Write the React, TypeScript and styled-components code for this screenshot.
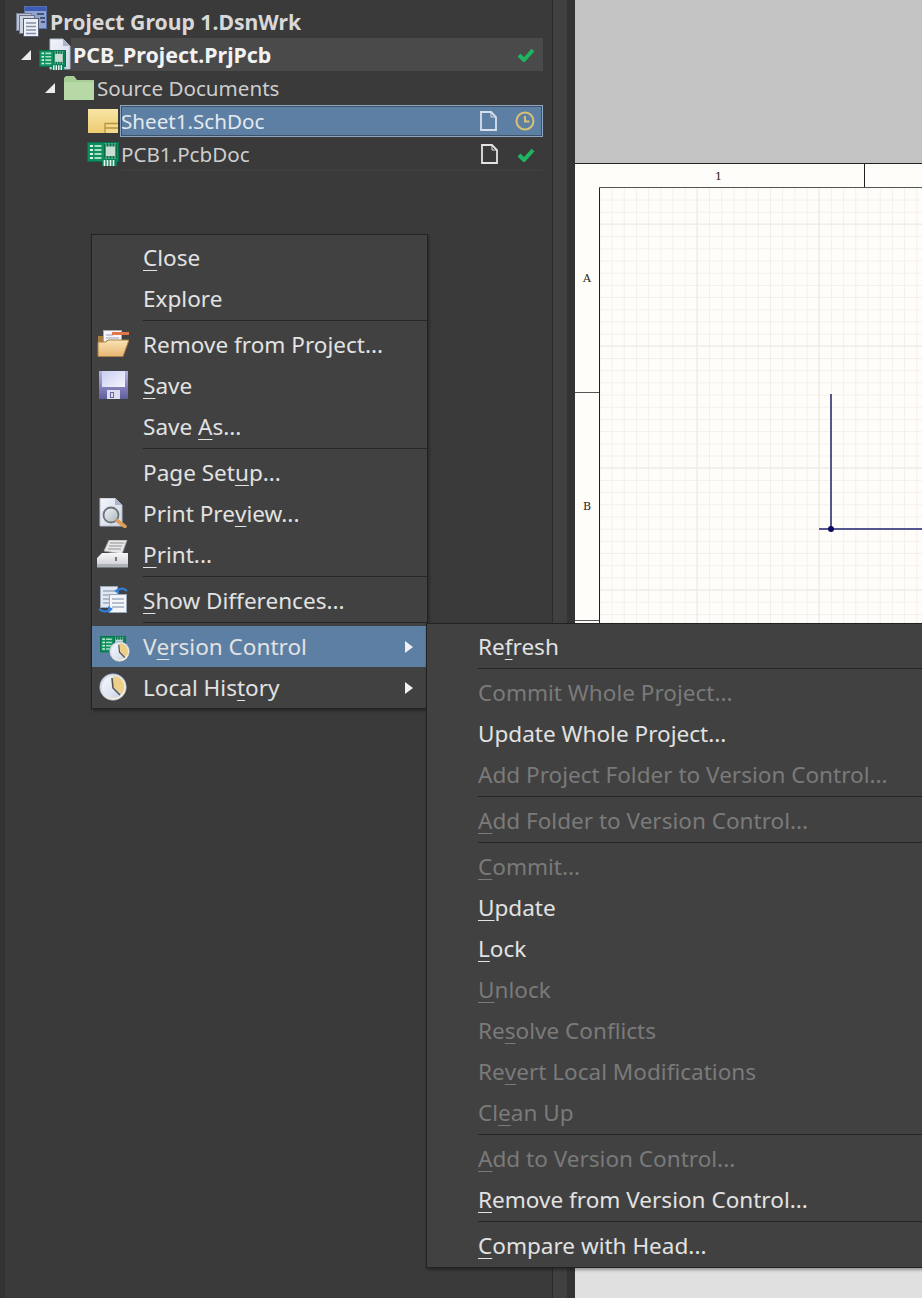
import { Fragment } from "react";
import styled, { createGlobalStyle } from "styled-components";

const GlobalStyle = createGlobalStyle`
  html, body {
    margin: 0;
    padding: 0;
    background: #3a3a3a;
  }
  #root {
    width: 922px;
    height: 1298px;
    overflow: hidden;
  }
`;

const FONT = `"Noto Sans", "Open Sans", sans-serif`;

// "&" marks the underlined mnemonic letter, the way the app's menu strings do
function Label({ text }: { text: string }) {
  const at = text.indexOf("&");
  if (at < 0) return <>{text}</>;
  return (
    <>
      {text.slice(0, at)}
      <Mnemonic>{text[at + 1]}</Mnemonic>
      {text.slice(at + 2)}
    </>
  );
}

/* ---------- icons ---------- */

// shared gradients, referenced by id from the icons below
function IconDefs() {
  return (
    <svg width="0" height="0" style={{ position: "absolute" }}>
      <defs>
        <linearGradient id="clockFace" x1="0" y1="0" x2="1" y2="1">
          <stop offset="0" stopColor="#f6f8fc" />
          <stop offset="0.55" stopColor="#dfe6f3" />
          <stop offset="1" stopColor="#c3cde2" />
        </linearGradient>
        <linearGradient id="clockRim" x1="0" y1="0" x2="1" y2="1">
          <stop offset="0" stopColor="#cfd8ea" />
          <stop offset="1" stopColor="#fff3d2" />
        </linearGradient>
        <linearGradient id="floppy" x1="0" y1="0" x2="0" y2="1">
          <stop offset="0" stopColor="#b3b2de" />
          <stop offset="1" stopColor="#5f5e9e" />
        </linearGradient>
        <linearGradient id="floppyLabel" x1="0" y1="0" x2="1" y2="1">
          <stop offset="0" stopColor="#c9cdf0" />
          <stop offset="1" stopColor="#f5f6fd" />
        </linearGradient>
        <linearGradient id="folderFront" x1="0" y1="0" x2="0" y2="1">
          <stop offset="0" stopColor="#f9e4b4" />
          <stop offset="1" stopColor="#e7b672" />
        </linearGradient>
        <linearGradient id="sheet" x1="0" y1="0" x2="0" y2="1">
          <stop offset="0" stopColor="#f8e5a6" />
          <stop offset="1" stopColor="#eecb70" />
        </linearGradient>
        <linearGradient id="printer" x1="0" y1="0" x2="0" y2="1">
          <stop offset="0" stopColor="#f7f7f8" />
          <stop offset="1" stopColor="#c9ccd2" />
        </linearGradient>
        <linearGradient id="page" x1="0" y1="0" x2="1" y2="1">
          <stop offset="0" stopColor="#f3f6fb" />
          <stop offset="1" stopColor="#cdd6e6" />
        </linearGradient>
        <linearGradient id="lens" x1="0" y1="0" x2="1" y2="1">
          <stop offset="0" stopColor="#f2f5f7" />
          <stop offset="1" stopColor="#a9b6bd" />
        </linearGradient>
      </defs>
    </svg>
  );
}

function WorkspaceIcon() {
  return (
    <svg width="32" height="32" viewBox="0 0 32 32">
      <rect x="9.500" y="0.500" width="22" height="22" fill="#8fa3cf" stroke="#5a6fa8" />
      <rect x="10" y="1" width="21" height="4" fill="#3d5cb8" />
      <rect x="1.500" y="7.500" width="15" height="17" fill="#b9c0cf" stroke="#77809a" />
      <rect x="4.500" y="9.500" width="15" height="18" fill="#cdd3e0" stroke="#6c748c" />
      <rect x="8.500" y="12.500" width="15" height="18" fill="#eef1f7" stroke="#565e76" />
      <path d="M11 17h10M11 20.500h10M11 24h10M11 27.500h10" stroke="#8590a8" strokeWidth="1.300" />
      <path d="M22 8h7M25 12h5M26 16h4" stroke="#2f3a58" strokeWidth="1.500" />
    </svg>
  );
}

function PcbChip({ size = 32 }: { size?: number }) {
  return (
    <svg width={size} height={size * 0.75} viewBox="0 0 32 24">
      <rect x="0" y="0" width="32" height="20" fill="#0e8f60" />
      <rect x="0.500" y="0.500" width="31" height="19" fill="none" stroke="#0a6f4b" />
      <rect x="3" y="3" width="3" height="2" fill="#d9f3e2" />
      <rect x="3" y="7" width="3" height="2" fill="#d9f3e2" />
      <rect x="3" y="11" width="3" height="2" fill="#d9f3e2" />
      <rect x="3" y="15" width="3" height="2" fill="#d9f3e2" />
      <path d="M7.500 4h7M7.500 8h7M7.500 12h7M7.500 16h7" stroke="#a8e0bf" strokeWidth="1.800" />
      <rect x="17" y="2" width="13" height="14" fill="#0b6b49" />
      <path d="M19 1v16M22 1v16M25 1v16M28 1v16" stroke="#7cc9a2" strokeWidth="1" />
      <rect x="19" y="4.500" width="9" height="9.500" fill="#c8ddd3" />
      <rect x="15" y="17" width="15" height="7" fill="#0c7d55" />
      <path d="M17.500 18v6M20.500 18v6M23.500 18v6M26.500 18v6" stroke="#eef8f1" strokeWidth="1.700" />
    </svg>
  );
}

function ProjectIcon() {
  return (
    <IconStack>
      <svg width="34" height="33" viewBox="0 0 34 33">
        <path d="M12 1h13l7 7v23H12z" fill="url(#page)" stroke="#b8bfd0" />
        <path d="M25 1v7h7z" fill="#aab3c8" />
      </svg>
      <ChipOverlay>
        <PcbChip size={27} />
      </ChipOverlay>
    </IconStack>
  );
}

function FolderIcon() {
  return (
    <svg width="30" height="26" viewBox="0 0 30 26">
      <path d="M0 25V3l2-2h8l3 4h17v20z" fill="#a7cf95" />
      <rect x="0" y="7" width="30" height="18" fill="#b6d9a5" />
    </svg>
  );
}

function SheetIcon() {
  return (
    <svg width="30" height="24" viewBox="0 0 30 24">
      <rect x="0" y="0" width="30" height="24" fill="url(#sheet)" />
      <rect x="17" y="14" width="13" height="10" fill="#f3d98d" />
      <path d="M17 24v-9.500h13M17 19h13" fill="none" stroke="#b8923f" strokeWidth="1.300" />
    </svg>
  );
}

function DocIcon({ color }: { color: string }) {
  return (
    <svg width="17" height="20" viewBox="0 0 17 20" fill="none" stroke={color} strokeWidth="1.800">
      <path d="M1 1h10l5 5v13H1z" />
      <path d="M11 1v5h5" strokeWidth="1" />
    </svg>
  );
}

function CheckIcon() {
  return (
    <svg width="18" height="15" viewBox="0 0 18 15">
      <path d="M2 8l5 5L16 3" fill="none" stroke="#1fb45f" strokeWidth="4" />
    </svg>
  );
}

function PendingIcon() {
  return (
    <svg width="20" height="20" viewBox="0 0 20 20" fill="none" stroke="#d9c272" strokeWidth="2">
      <circle cx="10" cy="10" r="8.500" />
      <path d="M10 5v5.500h4.500" />
    </svg>
  );
}

function OpenFolderIcon() {
  return (
    <svg width="32" height="27" viewBox="0 0 32 27">
      <path d="M1 6h5l1-2v8H1z" fill="#a97c43" />
      <rect x="6.500" y="0.500" width="18" height="17" fill="#f5f6f8" stroke="#a9a9a9" />
      <path d="M9 5h7M9 8h13M9 11h13M9 14h13" stroke="#94a0b5" />
      <rect x="15" y="2" width="17" height="3" fill="#e0764a" />
      <path d="M1 26.500V12h8l2-2h21l-6 16.500z" fill="url(#folderFront)" stroke="#a77f45" />
    </svg>
  );
}

function FloppyIcon() {
  return (
    <svg width="29" height="28" viewBox="0 0 29 28">
      <rect x="0" y="0" width="29" height="28" fill="url(#floppy)" />
      <rect x="3" y="0" width="23" height="16" fill="url(#floppyLabel)" />
      <rect x="8" y="19" width="13" height="9" fill="#dcddee" />
      <rect x="11" y="21" width="4" height="6" fill="#68689c" />
      <rect x="12" y="22" width="2" height="4" fill="#dcddee" />
    </svg>
  );
}

function PreviewIcon() {
  return (
    <svg width="28" height="30" viewBox="0 0 28 30">
      <path d="M1 0h15l7 7v21H1z" fill="url(#page)" stroke="#b5bccd" />
      <path d="M16 0v7h7z" fill="#aab4ca" />
      <circle cx="12" cy="17" r="7.500" fill="url(#lens)" stroke="#6b7378" strokeWidth="1.800" />
      <path d="M18 22.500l8 6" stroke="#dd9d55" strokeWidth="3.500" strokeLinecap="round" />
    </svg>
  );
}

function PrinterIcon() {
  return (
    <svg width="32" height="28" viewBox="0 0 32 28">
      <path d="M7 11l5-11h18l-5 14z" fill="#e8e8ea" stroke="#a5a5a8" />
      <path d="M13 3h14M12 6h13M11 9h13" stroke="#8f8f92" />
      <path d="M5 13h26v14H0V18z" fill="url(#printer)" />
      <rect x="0" y="24" width="31" height="3.500" fill="#aeb3ba" />
      <rect x="18" y="17" width="2" height="4" fill="#777" />
    </svg>
  );
}

function DiffIcon() {
  return (
    <svg width="30" height="30" viewBox="0 0 30 30">
      <rect x="2.500" y="1.500" width="17" height="21" fill="#e2e8f2" stroke="#9aa7b9" />
      <path d="M5 6h12M5 10h12M5 14h12M5 18h7" stroke="#7a8aa0" />
      <rect x="11.500" y="9.500" width="17" height="18" fill="#f3f5f9" stroke="#9aa7b9" />
      <path d="M14 14h12M14 18h12M14 22h12" stroke="#7a8aa0" />
      <path d="M29 6c-3-3-7-3-11 0" fill="none" stroke="#2f7fd8" strokeWidth="2" />
      <path d="M16 6l5-3v6z" fill="#2f7fd8" />
      <path d="M1 24c3 3 7 3 11 1" fill="none" stroke="#2f7fd8" strokeWidth="2" />
      <path d="M15 24l-5-3v7z" fill="#2f7fd8" />
    </svg>
  );
}

function ClockFace({ size }: { size: number }) {
  return (
    <svg width={size} height={size} viewBox="0 0 28 28">
      <circle cx="14" cy="14" r="13.500" fill="url(#clockRim)" stroke="#3b5d9c" strokeWidth="0.400" />
      <circle cx="14" cy="14" r="11" fill="url(#clockFace)" />
      <path d="M14 14l8.500 7A11 11 0 0 0 14 3z" fill="#ecd08a" />
      <path d="M13 5l1 10 7 7" fill="none" stroke="#55524f" strokeWidth="1.600" />
    </svg>
  );
}

function VersionIcon() {
  return (
    <IconStack>
      <PcbChip size={26} />
      <ClockOverlay>
        <ClockFace size={21} />
      </ClockOverlay>
    </IconStack>
  );
}

/* ---------- data ---------- */

type Entry = { label?: string; icon?: React.ReactNode; disabled?: boolean; active?: boolean; arrow?: boolean };
const SEP: Entry = {};

const contextMenu: Entry[] = [
  { label: "&Close" },
  { label: "Explore" },
  SEP,
  { label: "Remove from Project...", icon: <OpenFolderIcon /> },
  { label: "&Save", icon: <FloppyIcon /> },
  { label: "Save &As..." },
  SEP,
  { label: "Page Set&up..." },
  { label: "Print Pre&view...", icon: <PreviewIcon /> },
  { label: "&Print...", icon: <PrinterIcon /> },
  SEP,
  { label: "&Show Differences...", icon: <DiffIcon /> },
  SEP,
  { label: "V&ersion Control", icon: <VersionIcon />, active: true, arrow: true },
  { label: "Local His&tory", icon: <ClockFace size={28} />, arrow: true },
];

const versionMenu: Entry[] = [
  { label: "Re&fresh" },
  SEP,
  { label: "Commit Whole Project...", disabled: true },
  { label: "Update Whole Project..." },
  { label: "Add Project Folder to Version Control...", disabled: true },
  SEP,
  { label: "&Add Folder to Version Control...", disabled: true },
  SEP,
  { label: "&Commit...", disabled: true },
  { label: "&Update" },
  { label: "&Lock" },
  { label: "&Unlock", disabled: true },
  { label: "Re&solve Conflicts", disabled: true },
  { label: "Re&vert Local Modifications", disabled: true },
  { label: "Cl&ean Up", disabled: true },
  SEP,
  { label: "&Add to Version Control...", disabled: true },
  { label: "&Remove from Version Control..." },
  SEP,
  { label: "&Compare with Head..." },
];

function MenuList({ items }: { items: Entry[] }) {
  return (
    <>
      {items.map((item, i) =>
        item.label ? (
          <MenuRow key={i} $active={item.active} $disabled={item.disabled}>
            <MenuIcon>{item.icon}</MenuIcon>
            <Label text={item.label} />
            {item.arrow && <Arrow />}
          </MenuRow>
        ) : (
          <Fragment key={i}>
            <MenuSep />
          </Fragment>
        )
      )}
    </>
  );
}

export default function App() {
  return (
    <Page>
      <GlobalStyle />
      <IconDefs />
      <TreePanel>
        <Tree>
          <TreeRow $indent={15}>
            <WorkspaceIcon />
            <GroupName>Project Group 1.DsnWrk</GroupName>
          </TreeRow>
          <TreeRow $indent={21} $height={33}>
            <Twist $gap={7} />
            <ProjectIcon />
            <ProjectName>
              PCB_Project.PrjPcb
              <StatusCell $first>
                <CheckIcon />
              </StatusCell>
            </ProjectName>
          </TreeRow>
          <TreeRow $indent={45} $height={34}>
            <Twist $gap={9} />
            <FolderIcon />
            <PlainName $gap={3}>Source Documents</PlainName>
          </TreeRow>
          <TreeRow $indent={88} $height={32}>
            <SheetIcon />
            <SelectedName>
              Sheet1.SchDoc
              <DocCell>
                <DocIcon color="#d7e1ee" />
              </DocCell>
              <StatusCell>
                <PendingIcon />
              </StatusCell>
            </SelectedName>
          </TreeRow>
          <TreeRow $indent={87} $height={34}>
            <PcbChip />
            <PlainName $gap={2} $ruled>
              PCB1.PcbDoc
              <DocCell>
                <DocIcon color="#e4e4e4" />
              </DocCell>
              <StatusCell>
                <CheckIcon />
              </StatusCell>
            </PlainName>
          </TreeRow>
        </Tree>
      </TreePanel>
      <Gutter />
      <Canvas>
        <CanvasTop />
        <Sheet>
          <LeftRail>
            <RailCell $h={229}>A</RailCell>
            <RailCell $h={228}>B</RailCell>
            <RailCell $h={228} />
          </LeftRail>
          <TopRail>
            <ColumnCell $w={266}>1</ColumnCell>
            <ColumnCell />
          </TopRail>
          <GridArea>
            <Wires width="323" height="1079" viewBox="0 0 323 1079">
              <path d="M232 207V342M220 342H323" fill="none" stroke="#55558f" strokeWidth="2" />
              <circle cx="232" cy="342" r="3" fill="#0a0a5e" />
            </Wires>
          </GridArea>
        </Sheet>
      </Canvas>
      <ContextMenu>
        <MenuList items={contextMenu} />
      </ContextMenu>
      <SubMenu>
        <MenuList items={versionMenu} />
      </SubMenu>
    </Page>
  );
}

/* ---------- layout ---------- */

const Page = styled.div`
  position: relative;
  display: flex;
  width: 922px;
  height: 1298px;
  overflow: hidden;
  font-family: ${FONT};
  color: #dedede;
`;

const TreePanel = styled.aside`
  width: 553px;
  flex: none;
  box-sizing: border-box;
  background: #3a3a3a;
  border-left: 5px solid #333333;
  border-right: 1px solid #2b2b2b;
`;

const Tree = styled.div`
  display: flex;
  flex-direction: column;
  padding-top: 5px;
  margin-left: -5px;
  width: 543px;
`;

const TreeRow = styled.div<{ $indent: number; $height?: number }>`
  display: flex;
  align-items: center;
  height: ${(p) => p.$height ?? 33}px;
  padding-left: ${(p) => p.$indent}px;
  box-sizing: border-box;
`;

const Twist = styled.span<{ $gap: number }>`
  width: 0;
  height: 0;
  margin-right: ${(p) => p.$gap}px;
  border-style: solid;
  border-width: 0 0 10px 10px;
  border-color: transparent transparent #ececec transparent;
`;

const IconStack = styled.span`
  position: relative;
  display: inline-flex;
`;

const ChipOverlay = styled.span`
  position: absolute;
  left: 1px;
  bottom: 1px;
  display: flex;
`;

const ClockOverlay = styled.span`
  position: absolute;
  right: -4px;
  bottom: -7px;
  display: flex;
`;

const GroupName = styled.span`
  font-size: 21.200px;
  font-weight: 700;
  color: #d8d8d8;
  margin-left: 3px;
`;

const ProjectName = styled.span`
  flex: 1;
  display: flex;
  align-items: center;
  align-self: stretch;
  font-size: 21.400px;
  font-weight: 700;
  color: #f2f2f2;
  background: #4a4a4a;
  margin-left: -1px;
  padding-left: 2px;
`;

const PlainName = styled.span<{ $gap: number; $ruled?: boolean }>`
  flex: 1;
  display: flex;
  align-items: center;
  align-self: stretch;
  font-size: 20.600px;
  margin-left: ${(p) => p.$gap}px;
  color: #cdcdcd;
  box-shadow: ${(p) => (p.$ruled ? "inset 0 -1px 0 #414141" : "none")};
`;

const SelectedName = styled.span`
  flex: 1;
  display: flex;
  align-items: center;
  align-self: stretch;
  font-size: 20.600px;
  color: #e4e9ef;
  margin-left: 2px;
  background: #5d7fa3;
  border: 1px solid #8ea6bf;
  box-shadow: inset 0 0 0 1px #3e526b;
  box-sizing: border-box;
`;

const DocCell = styled.span`
  display: flex;
  margin-left: auto;
  margin-right: 18px;
`;

const StatusCell = styled.span<{ $first?: boolean }>`
  display: flex;
  justify-content: center;
  width: 20px;
  margin-right: 7px;
  margin-left: ${(p) => (p.$first ? "auto" : "0")};
`;

const Gutter = styled.div`
  width: 22px;
  flex: none;
  background: linear-gradient(to right, #404040 0 14px, #333333 14px);
`;

const Canvas = styled.main`
  flex: 1;
  display: flex;
  flex-direction: column;
  background: #e0e0e0;
`;

const CanvasTop = styled.div`
  height: 163px;
  flex: none;
  background: #c3c3c3;
`;

const Sheet = styled.section`
  display: grid;
  grid-template-columns: 24px 1fr;
  grid-template-rows: 25px 1fr;
  height: 1104px;
  flex: none;
  background: #fffdf9;
  font-family: "DejaVu Serif", "Liberation Serif", serif;
  font-size: 11px;
  color: #1a1a1a;
`;

const LeftRail = styled.div`
  grid-row: 1 / 3;
  display: flex;
  flex-direction: column;
  border-top: 1px solid #222222;
  box-sizing: border-box;
`;

const RailCell = styled.div<{ $h: number }>`
  height: ${(p) => p.$h}px;
  flex: none;
  display: flex;
  align-items: center;
  justify-content: center;
  box-sizing: border-box;
  border-bottom: 1px solid #555555;
`;

const TopRail = styled.div`
  display: flex;
  border-top: 1px solid #222222;
  border-bottom: 1px solid #555555;
  box-sizing: border-box;
`;

const ColumnCell = styled.div<{ $w?: number }>`
  flex: ${(p) => (p.$w ? `0 0 ${p.$w}px` : "1")};
  display: flex;
  align-items: center;
  justify-content: center;
  padding-right: 26px;
  padding-top: 1px;
  box-sizing: border-box;
  border-right: ${(p) => (p.$w ? "1px solid #222222" : "none")};
`;

const GridArea = styled.div`
  position: relative;
  border-left: 1px solid #222222;
  background-color: #fffdf9;
  background-image:
    linear-gradient(to right, #eceae6 1px, transparent 1px),
    linear-gradient(to bottom, #eceae6 1px, transparent 1px),
    linear-gradient(to right, #f4f0e9 1px, transparent 1px),
    linear-gradient(to bottom, #f4f0e9 1px, transparent 1px);
  background-size: 122px 122px, 122px 122px, 12.200px 12.200px, 12.200px 12.200px;
  background-position: 96.500px 0, 0 35.500px, 11.600px 11.600px, 11.600px 11.600px;
`;

const Wires = styled.svg`
  position: absolute;
  left: -1px;
  top: -1px;
  display: block;
`;

const MenuPanel = styled.div`
  position: absolute;
  box-sizing: border-box;
  display: flex;
  flex-direction: column;
  background: #414141;
  border: 1px solid #222222;
  padding: 2px 0 0;
  box-shadow: 1px 2px 3px rgba(0, 0, 0, 0.35);
`;

const ContextMenu = styled(MenuPanel)`
  left: 91px;
  top: 234px;
  width: 337px;
  height: 475px;
`;

const SubMenu = styled(MenuPanel)`
  left: 426px;
  top: 623px;
  width: 520px;
  height: 645px;
`;

const MenuRow = styled.div<{ $active?: boolean; $disabled?: boolean }>`
  position: relative;
  display: flex;
  align-items: center;
  height: 41px;
  flex: none;
  font-size: 22.550px;
  white-space: pre;
  padding-right: 14px;
  background: ${(p) => (p.$active ? "#5d7fa3" : "transparent")};
  color: ${(p) => (p.$disabled ? "#7a7a7a" : "#e2e2e2")};
`;

const MenuIcon = styled.span`
  width: 51px;
  flex: none;
  display: flex;
  justify-content: center;
  padding: 0 9px 2px 0;
  box-sizing: border-box;
`;

const Mnemonic = styled.span`
  text-decoration: underline;
  text-decoration-thickness: 1px;
  text-underline-offset: 4px;
`;

const MenuSep = styled.div`
  height: 1px;
  flex: none;
  margin: 1px 0 3px 51px;
  background: #262626;
`;

const Arrow = styled.span`
  margin-left: auto;
  width: 0;
  height: 0;
  border-style: solid;
  border-width: 6px 0 6px 8px;
  border-color: transparent transparent transparent #f0f0f0;
`;
